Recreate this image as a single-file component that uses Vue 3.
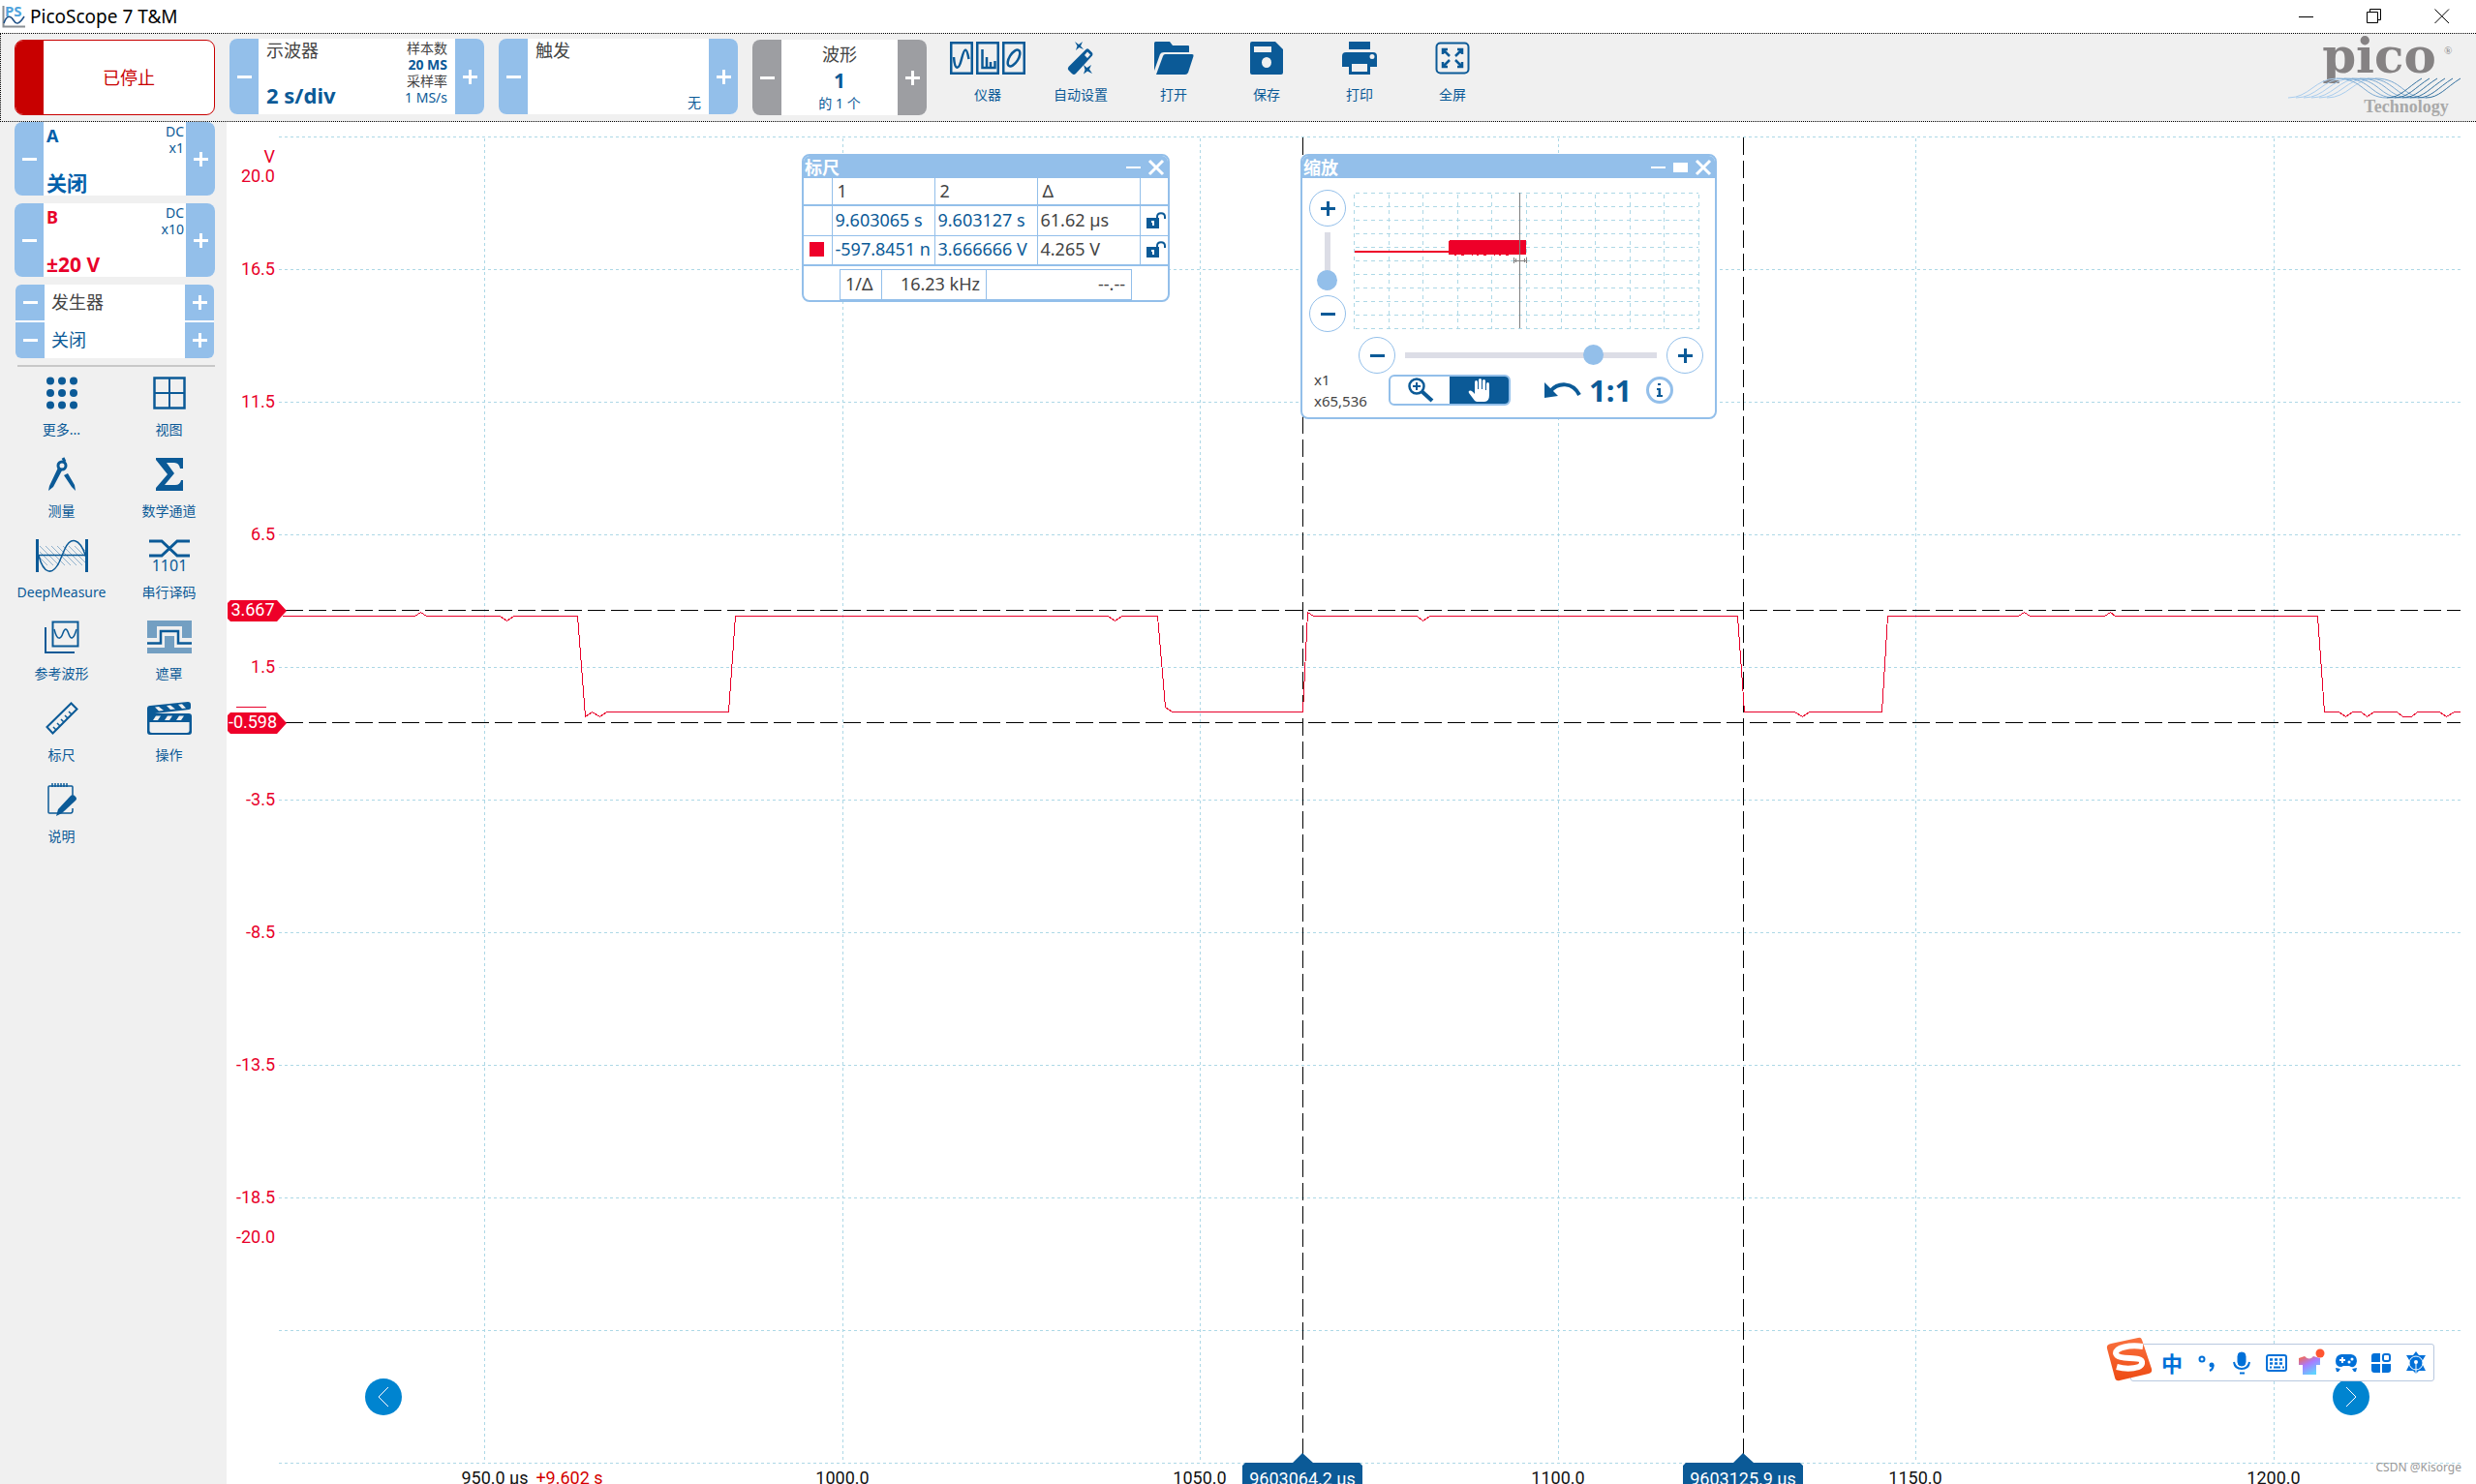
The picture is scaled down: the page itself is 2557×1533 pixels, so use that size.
<script setup>
import { ref } from 'vue'

const zoomX = ref(77)
const zoomY = ref(0)

const columns = [
  { x: 500, label: '950.0 µs', lx: 511 },
  { x: 870, label: '1000.0', lx: 870 },
  { x: 1239, label: '1050.0', lx: 1239 },
  { x: 1609, label: '1100.0', lx: 1609 },
  { x: 1978, label: '1150.0', lx: 1978 },
  { x: 2348, label: '1200.0', lx: 2348 },
]
const rows = [141, 278, 415, 552, 689, 826, 963, 1100, 1237, 1374, 1511]
const volts = [
  { y: 168, t: 'V' },
  { y: 188, t: '20.0' },
  { y: 284, t: '16.5' },
  { y: 421, t: '11.5' },
  { y: 558, t: '6.5' },
  { y: 695, t: '1.5' },
  { y: 832, t: '-3.5' },
  { y: 969, t: '-8.5' },
  { y: 1106, t: '-13.5' },
  { y: 1243, t: '-18.5' },
  { y: 1284, t: '-20.0' },
]
const levels = [
  { y: 630, t: '3.667' },
  { y: 746, t: '-0.598' },
]
const markers = [
  { x: 1345, t: '9603064.2 µs' },
  { x: 1800, t: '9603125.9 µs' },
]
const trace = [
  '291,636 428,636 434,632 440,636 516,636 523,641 530,636 596,636 604,740 611,735 619,740 626,735',
  '752,735 759,636 1144,636 1151,641 1158,636 1195,636 1203,730 1210,735 1345,735 1350,632 1356,636',
  '1463,636 1469,641 1476,636 1794,636 1801,735 1853,735 1861,740 1868,735 1943,735 1949,636',
  '2084,636 2090,632 2096,636 2173,636 2179,632 2184,636 2393,636 2400,735 2415,735 2422,740 2429,735',
  '2438,735 2444,740 2451,735 2475,735 2481,740 2490,740 2496,735 2519,735 2526,740 2534,735 2540,735',
].join(' ')
const miniCols = Array.from({ length: 11 }, (_, i) => Math.round(i * 35.6))
const miniRows = Array.from({ length: 11 }, (_, i) => i * 14)
</script>

<template>
  <div class="app">
    <header class="titlebar">
      <svg class="app-icon" width="24" height="24" viewBox="0 0 24 24" fill="none">
        <path d="M1.500 1V22.500H24" stroke="#8a8f94" stroke-width="2" />
        <path d="M2 19C5 10 9 11 12 16S18 20 23 12" stroke="#1d4f86" stroke-width="1.500" />
        <text x="3" y="12" font-family="Noto Sans" font-weight="700" font-size="15" fill="#4fa3dc">PS</text>
      </svg>
      <h1>PicoScope 7 T&amp;M</h1>
      <div class="win-buttons">
        <button aria-label="最小化"><svg width="16" height="16"><path d="M0 8.500H15" stroke="#000" /></svg></button>
        <button aria-label="还原"><svg width="16" height="16" fill="none" stroke="#000"><path d="M.5 3.500H11.500V14.500H.5ZM3.500 3.500V.5H14.500V11.500H11.500" /></svg></button>
        <button aria-label="关闭"><svg width="16" height="16"><path d="M.5 .5L15 15M15 .5L.5 15" stroke="#000" /></svg></button>
      </div>
    </header>

    <nav class="toolbar">
      <button class="stop"><span class="stop-bar"></span><span class="stop-text">已停止</span></button>

      <section class="stepper scope">
        <button aria-label="减小时基"><i class="minus"></i></button>
        <div class="stepper-body spread">
          <div class="stack"><span class="name">示波器</span><strong class="big">2 s/div</strong></div>
          <div class="info">
            <span class="dark">样本数</span><b>20 MS</b><span class="dark">采样率</span><span>1 MS/s</span>
          </div>
        </div>
        <button aria-label="增大时基"><i class="plus"></i></button>
      </section>

      <section class="stepper trigger">
        <button aria-label="上一触发"><i class="minus"></i></button>
        <div class="stepper-body stack"><span class="name">触发</span><span class="none">无</span></div>
        <button aria-label="下一触发"><i class="plus"></i></button>
      </section>

      <section class="stepper grey wave">
        <button aria-label="上一波形"><i class="minus"></i></button>
        <div class="stepper-body centered"><span class="name">波形</span><strong>1</strong><span class="small">的 1 个</span></div>
        <button aria-label="下一波形"><i class="plus"></i></button>
      </section>

      <div class="tools">
        <button class="tool">
          <svg width="78" height="34" viewBox="0 0 78 34" fill="none" stroke="#0b5a97" stroke-width="2.500">
            <path d="M1.250 1.250H22.750V32.750H1.250ZM28.250 1.250H49.750V32.750H28.250ZM55.250 1.250H76.750V32.750H55.250Z" />
            <path d="M4 16C5 30 9 30 12 18S17 5 19.500 18" />
            <path d="M33.500 8V27H46.500V20M38 27V16M42 27V21" />
            <ellipse cx="66" cy="17" rx="4.500" ry="9.500" transform="rotate(32 66 17)" />
          </svg>
          <span>仪器</span>
        </button>
        <button class="tool">
          <svg width="28" height="34" viewBox="0 0 28 34" fill="#0b5a97">
            <path fill-rule="evenodd" d="M19.500 8Q21 6.500 22.500 8L26 11.500Q27 13 26 14.500L9 33Q7 35 5 33L1.500 29.500Q0 28 1.500 26ZM21 10.500L18 14L21 17L24 13.500Z" />
            <path d="M8 0L12 3L16 0L14 4.500L17 8L12.500 6L9 9L10.500 4.500ZM17 24L20.500 27L25 24L23 28.500L26 33L21 30.500L17 33.500L18.500 29Z" />
          </svg>
          <span>自动设置</span>
        </button>
        <button class="tool">
          <svg width="42" height="34" viewBox="0 0 42 34" fill="#0b5a97">
            <path d="M1 34V1.500Q1 0 2.500 0H17L20 4H36Q37 4 37 5V11H11Q8 11 7 13L1 30Z" />
            <path d="M3 34L10 15Q10.500 13 12.500 13H40Q42 13 41.500 15L36 32Q35 34 33 34Z" />
          </svg>
          <span>打开</span>
        </button>
        <button class="tool">
          <svg width="34" height="34" viewBox="0 0 34 34" fill="#0b5a97">
            <path fill-rule="evenodd" d="M2 0H26L34 8V32Q34 34 32 34H2Q0 34 0 32V2Q0 0 2 0ZM4 5V11H22V5ZM17 16A5 5.500 0 1 0 17 27A5 5.500 0 1 0 17 16Z" />
          </svg>
          <span>保存</span>
        </button>
        <button class="tool">
          <svg width="36" height="34" viewBox="0 0 36 34" fill="#0b5a97">
            <path d="M7 0H29V8H7Z" />
            <path fill-rule="evenodd" d="M4 11H32Q36 11 36 15V26H29V34H7V26H0V15Q0 11 4 11ZM10 23V31H26V23ZM31 13A2.500 2.500 0 1 0 31 18A2.500 2.500 0 1 0 31 13Z" />
          </svg>
          <span>打印</span>
        </button>
        <button class="tool">
          <svg width="36" height="34" viewBox="0 0 36 34" fill="none" stroke="#0b5a97" stroke-width="2.500">
            <rect x="1.500" y="1.500" width="33" height="31" rx="4" stroke-width="2" />
            <path d="M8 13V8H13M8 8L15 15M23 8H28V13M28 8L21 15M8 21V26H13M8 26L15 19M23 26H28V21M28 26L21 19" />
          </svg>
          <span>全屏</span>
        </button>
      </div>

      <svg class="logo" width="184" height="88" viewBox="0 0 184 88">
        <text x="94" y="39" text-anchor="middle" font-family="DejaVu Serif" font-weight="700" font-size="50" fill="#858283">pico</text>
        <text x="161" y="20" font-family="Liberation Serif" font-size="11" fill="#858283">®</text>
        <g fill="none" stroke-width="1">
          <path v-for="i in 6" :key="'l' + i" :transform="`translate(${i * 8 - 8} 0)`" stroke="#a9cdee" d="M0 65C22 65 28 45 50 45" />
          <path v-for="i in 6" :key="'m' + i" :transform="`translate(${i * 8 - 8} 0)`" stroke="#7ba9d2" d="M50 45C78 45 78 65 102 65" />
          <path v-for="i in 6" :key="'r' + i" :transform="`translate(${i * 8 - 8} 0)`" stroke="#34719f" d="M102 65C116 65 122 55 138 45" />
        </g>
        <text x="122" y="80" text-anchor="middle" font-family="Liberation Serif" font-weight="700" font-size="18" fill="#a9a9a9">Technology</text>
      </svg>
    </nav>

    <div class="main">
      <aside class="sidebar">
        <section class="stepper channel blue">
          <button aria-label="减小 A"><i class="minus"></i></button>
          <div class="stepper-body spread">
            <div class="stack"><b>A</b><strong class="big">关闭</strong></div>
            <div class="info"><span>DC</span><span>x1</span></div>
          </div>
          <button aria-label="增大 A"><i class="plus"></i></button>
        </section>
        <section class="stepper channel red">
          <button aria-label="减小 B"><i class="minus"></i></button>
          <div class="stepper-body spread">
            <div class="stack"><b>B</b><strong class="big">±20 V</strong></div>
            <div class="info"><span>DC</span><span>x10</span></div>
          </div>
          <button aria-label="增大 B"><i class="plus"></i></button>
        </section>
        <section class="generator">
          <div class="gen-row"><button aria-label="减小发生器"><i class="minus"></i></button><span class="name">发生器</span><button aria-label="增大发生器"><i class="plus"></i></button></div>
          <div class="gen-row"><button aria-label="上一状态"><i class="minus"></i></button><span>关闭</span><button aria-label="下一状态"><i class="plus"></i></button></div>
        </section>
        <hr />
        <div class="side-tools">
          <button class="tool">
            <svg width="34" height="34" viewBox="0 0 34 34" fill="#0b5a97">
              <template v-for="r in 3" :key="r"><circle v-for="c in 3" :key="c" :cx="c * 12 - 7" :cy="r * 12.500 - 8" r="4" /></template>
            </svg>
            <span>更多...</span>
          </button>
          <button class="tool">
            <svg width="34" height="34" viewBox="0 0 34 34" fill="none" stroke="#0b5a97"><path stroke-width="2.500" d="M1.500 1.500H32.500V32.500H1.500Z" /><path stroke-width="2" d="M17 1V33M1 17H33" /></svg>
            <span>视图</span>
          </button>
          <button class="tool">
            <svg width="30" height="34" viewBox="0 0 30 34" fill="none" stroke="#0b5a97">
              <circle cx="15" cy="8" r="4" stroke-width="3" /><path stroke-width="3" d="M16 0L18 4" />
              <path fill="#0b5a97" stroke="none" d="M11 10L15 13L6 30L1 34L2 29ZM17 18L21 16L28 28L29 34L25 30Z" />
            </svg>
            <span>测量</span>
          </button>
          <button class="tool">
            <svg width="30" height="34" viewBox="0 0 30 34" fill="#0b5a97"><path d="M1 0H29V11H26Q25 5 20 5H12L20 16L10 28H21Q26 28 27 23H29V34H1V31L13 17L1 2Z" /></svg>
            <span>数学通道</span>
          </button>
          <button class="tool">
            <svg width="54" height="34" viewBox="0 0 54 34" fill="none" stroke="#0b5a97">
              <path stroke="#8fb1cd" stroke-width="1" d="M4 7L24 27M10 7L30 27M16 7L36 27M22 7L42 27M28 7L48 27M34 7L51 24M40 7L51 18M46 7L51 12M4 13L18 27M4 19L12 27" />
              <path stroke-width="3" d="M1.500 0V34M52.500 0V34" /><path stroke-width="1.500" d="M3 16.500H51" />
              <path stroke-width="1.500" d="M3 17C8 36 17 38 24 24L30 10C36 -3 45 -1 51 16" />
            </svg>
            <span>DeepMeasure</span>
          </button>
          <button class="tool">
            <svg width="42" height="34" viewBox="0 0 42 34">
              <path fill="none" stroke="#0b5a97" stroke-width="3" d="M0 2H13L29 17H42M0 17H13L29 2H42" />
              <text x="21" y="33" text-anchor="middle" font-family="Noto Sans" font-size="16" fill="#0b5a97">1101</text>
            </svg>
            <span>串行译码</span>
          </button>
          <button class="tool">
            <svg width="36" height="34" viewBox="0 0 36 34" fill="none" stroke="#0b5a97">
              <rect x="8.500" y="1.500" width="26" height="25" stroke-width="2" /><path stroke-width="2" d="M1 7V33H31" />
              <path stroke-width="1.500" d="M10 9C13 22 17 19 19 13S23 8 25 14S30 20 33 9" />
            </svg>
            <span>参考波形</span>
          </button>
          <button class="tool">
            <svg width="46" height="34" viewBox="0 0 46 34">
              <path fill="#739fc2" d="M0 0H46V18H36V6H10V18H0ZM0 28H18V16H28V28H46V34H0Z" />
              <path fill="none" stroke="#0b5a97" stroke-width="2.500" d="M0 23.500H14V11H32V23.500H46" />
            </svg>
            <span>遮罩</span>
          </button>
          <button class="tool">
            <svg width="34" height="34" viewBox="0 0 34 34" fill="none" stroke="#0b5a97" stroke-width="2">
              <path d="M1.500 26L26.500 1.500L32.500 7.500L7.500 32.500Z" /><path stroke-width="1.500" d="M11 29L8 26M15 25L12 22M19 21L16 18M23 17L20 14M27 13L24 10" />
            </svg>
            <span>标尺</span>
          </button>
          <button class="tool">
            <svg width="46" height="34" viewBox="0 0 46 34">
              <path fill="#0b5a97" d="M3 4L42 0Q45 0 45 3V6Q45 8 43 8L8 12H43Q46 12 46 15V31Q46 34 43 34H3Q0 34 0 31V7Q0 4 3 4Z" />
              <path fill="#f0f0f0" d="M2.500 21H43.500V30Q43.500 32 41 32H5Q2.500 32 2.500 30ZM8 5.500L12 5L17 9L12 9.500ZM20 4L24 3.600L29 7.500L24 8ZM32 2.700L36 2.300L40 6.500L36 7ZM9 14.500H14L11 19H6ZM21 14.500H26L23 19H18ZM33 14.500H38L35 19H30Z" />
            </svg>
            <span>操作</span>
          </button>
          <button class="tool">
            <svg width="30" height="34" viewBox="0 0 30 34" fill="none" stroke="#0b5a97" stroke-width="1.500">
              <path d="M26 12V4Q26 3 25 3H2Q1 3 1 4V30Q1 31 2 31H24Q26 31 26 28V26M5 0V4M8 0V4M11 0V4M14 0V4M17 0V4M20 0V4" />
              <path fill="#0b5a97" stroke="none" d="M9 34L11 27L24 13Q26 11 28 13L29 14Q31 16 29 18L15 31Z" />
            </svg>
            <span>说明</span>
          </button>
        </div>
      </aside>

      <main class="plot">
        <svg class="graph" viewBox="234 126 2323 1407">
          <g stroke="#add8e6" stroke-dasharray="3 3" shape-rendering="crispEdges">
            <line v-for="c in columns" :key="c.x" :x1="c.x + 0.5" :x2="c.x + 0.5" y1="143" y2="1511" />
            <line v-for="y in rows" :key="y" x1="288" x2="2541" :y1="y + 0.5" :y2="y + 0.5" />
          </g>
          <g stroke="#000" stroke-dasharray="18 6" shape-rendering="crispEdges">
            <line v-for="l in levels" :key="l.t" x1="295" x2="2541" :y1="l.y + 0.5" :y2="l.y + 0.5" />
            <line v-for="m in markers" :key="m.x" :x1="m.x + 0.5" :x2="m.x + 0.5" y1="142" y2="1502" />
          </g>
          <polyline :points="trace" transform="translate(0.5 0.5)" fill="none" stroke="#e8002a" shape-rendering="crispEdges" />
          <line x1="244" x2="275" y1="730.5" y2="730.5" stroke="#e8002a" />
          <g class="volts"><text v-for="v in volts" :key="v.y" x="284" :y="v.y">{{ v.t }}</text></g>
          <g v-for="l in levels" :key="l.t" :transform="`translate(235 ${l.y - 10})`">
            <path d="M3 0H51L61 11L51 22H3L0 19V3Z" fill="#ee0029" />
            <text class="level" x="26" y="16">{{ l.t }}</text>
          </g>
          <text v-for="c in columns" :key="c.x" class="time" :x="c.lx" y="1533">{{ c.label }}</text>
          <text class="time offset" x="588" y="1533">+9.602 s</text>
          <g v-for="m in markers" :key="m.t" :transform="`translate(${m.x} 1501)`">
            <path d="M0 0L11 10H59L62 13V32H-62V13L-59 10H-10Z" fill="#0b5a97" />
            <text class="time flag" x="0" y="33">{{ m.t }}</text>
          </g>
        </svg>

        <section class="window rulers">
          <header><h2>标尺</h2><button aria-label="最小化"><i class="bar"></i></button><button aria-label="关闭"><svg width="16" height="16"><path d="M1 1L15 15M15 1L1 15" stroke="#fff" stroke-width="3" /></svg></button></header>
          <table class="values">
            <colgroup><col class="c-key" /><col class="c-val" /><col class="c-val" /><col class="c-val" /><col class="c-lock" /></colgroup>
            <tbody>
              <tr><th></th><th>1</th><th>2</th><th>Δ</th><th></th></tr>
              <tr>
                <td></td><td class="edit">9.603065 s</td><td class="edit">9.603127 s</td><td>61.62 µs</td>
                <td class="lock"><svg width="20" height="18" viewBox="0 0 20 18"><path fill="#0b5a97" d="M0 6H13V17H0Z" /><path fill="none" stroke="#0b5a97" stroke-width="2" d="M11 7V5C11 0 19 0 19 5V7" /><path fill="#fff" d="M5 9H8V14H6V11H5Z" /></svg></td>
              </tr>
              <tr>
                <td><span class="swatch"></span></td><td class="edit">-597.8451 n</td><td class="edit">3.666666 V</td><td>4.265 V</td>
                <td class="lock"><svg width="20" height="18" viewBox="0 0 20 18"><path fill="#0b5a97" d="M0 6H13V17H0Z" /><path fill="none" stroke="#0b5a97" stroke-width="2" d="M11 7V5C11 0 19 0 19 5V7" /><path fill="#fff" d="M5 9H8V14H6V11H5Z" /></svg></td>
              </tr>
            </tbody>
          </table>
          <table class="frequency">
            <tbody><tr><th>1/Δ</th><td class="freq">16.23 kHz</td><td>--.--</td></tr></tbody>
          </table>
        </section>

        <section class="window zoom">
          <header><h2>缩放</h2><button aria-label="最小化"><i class="bar"></i></button><button aria-label="最大化"><i class="box"></i></button><button aria-label="关闭"><svg width="16" height="16"><path d="M1 1L15 15M15 1L1 15" stroke="#fff" stroke-width="3" /></svg></button></header>
          <div class="zoom-top">
            <div class="vertical">
              <button class="round" aria-label="垂直放大"><i class="plus"></i></button>
              <input v-model="zoomY" class="slider-v" type="range" min="0" max="100" aria-label="垂直缩放" />
              <button class="round" aria-label="垂直缩小"><i class="minus"></i></button>
            </div>
            <svg class="mini" width="358" height="142" viewBox="0 0 358 142" shape-rendering="crispEdges">
              <g stroke="#add8e6" stroke-dasharray="4 4">
                <line v-for="x in miniCols" :key="x" :x1="x + 0.5" :x2="x + 0.5" y1="2" y2="141" />
                <line v-for="y in miniRows" :key="y" x1="2" x2="356" :y1="y + 0.5" :y2="y + 0.5" />
              </g>
              <path fill="#ee0029" d="M1 60H98V50L100 49H178V64H98V62H1Z" />
              <path fill="none" stroke="#ee0029" stroke-dasharray="2 5 3 8 1 4" d="M104 64.500H160" />
              <path fill="none" stroke="#808080" d="M171.500 0V140M165.500 67V73M178.500 67V73M167.500 68V72M176.500 68V72M165 70.500H179" />
            </svg>
          </div>
          <div class="horizontal">
            <button class="round" aria-label="水平缩小"><i class="minus"></i></button>
            <input v-model="zoomX" class="slider-h" type="range" min="0" max="100" aria-label="水平缩放" />
            <button class="round" aria-label="水平放大"><i class="plus"></i></button>
          </div>
          <div class="zoom-bottom">
            <div class="factors"><span>x1</span><span>x65,536</span></div>
            <div class="modes">
              <button aria-label="放大工具"><svg width="28" height="26" viewBox="0 0 28 26" fill="none" stroke="#0b5a97"><circle cx="10" cy="9" r="7.500" stroke-width="2.500" /><path stroke-width="2" d="M6 9H14M10 5V13" /><path stroke-width="4" d="M15 14L26 24" /></svg></button>
              <button class="active" aria-label="平移工具"><svg width="24" height="26" viewBox="0 0 24 26" fill="#fff"><path d="M7 24L1 16Q0 14 2 13.500Q4 13 7 17V5Q7 3 8.500 3T10 5V12H11V2.500Q11 1 12.500 1T14 2.500V12H15V3.500Q15 2 16.500 2T18 3.500V13H19V7Q19 5 20.500 5T22 7V18Q22 25 17 25H10Q8 25 7 24Z" /></svg></button>
            </div>
            <button class="undo" aria-label="撤消"><svg width="38" height="18" viewBox="0 0 38 18"><path fill="#0b5a97" d="M0 1L14 15L0 17Z" /><path fill="none" stroke="#0b5a97" stroke-width="4" d="M6 10C14 1 29 0 36 14" /></svg></button>
            <button class="one">1:1</button>
            <button class="about" aria-label="信息"><svg width="28" height="28" viewBox="0 0 28 28"><circle cx="14" cy="14" r="12.500" fill="none" stroke="#93bfea" stroke-width="3" /><path fill="#0b5a97" d="M12 7H15V9H12ZM11 12H15V19H17V21H11V19H12.500V14H11Z" /></svg></button>
          </div>
        </section>

        <button class="page prev" aria-label="上一页"><svg width="12" height="22"><path d="M11 1L1 11L11 21" fill="none" stroke="#fff" /></svg></button>
        <button class="page next" aria-label="下一页"><svg width="12" height="22"><path d="M1 1L11 11L1 21" fill="none" stroke="#fff" /></svg></button>

        <div class="ime">
          <svg class="sogou" width="48" height="46" viewBox="0 0 48 46">
            <defs><linearGradient id="sg" x1="0" y1="0" x2="0" y2="1"><stop offset="0" stop-color="#f9713f" /><stop offset="1" stop-color="#ee4a12" /></linearGradient></defs>
            <path d="M5 7L33 1Q36 0 37 3L47 33Q48 37 44 38L14 45Q10 46 9 42L1 12Q0 8 5 7Z" fill="url(#sg)" />
            <path d="M38 10C24 8 10 11 10 17C11 25 37 19 37 26C38 33 22 34 11 31" fill="none" stroke="#fff" stroke-width="6" />
          </svg>
          <button class="zh">中</button>
          <button aria-label="标点"><svg width="22" height="22" fill="none" stroke="#0070d8"><circle cx="6" cy="7" r="2.500" stroke-width="2" /><circle cx="16" cy="13" r="2.500" fill="#0070d8" stroke="none" /><path d="M17.500 13Q18 17 14 19" stroke-width="2" /></svg></button>
          <button aria-label="语音"><svg width="20" height="24" fill="none" stroke="#0070d8"><rect x="6" y="1" width="8" height="14" rx="4" fill="#0070d8" /><path stroke-width="2" d="M2 11Q3 18 10 18T18 11M8 22.500H13" /></svg></button>
          <button aria-label="键盘"><svg width="24" height="22" fill="none" stroke="#0070d8"><rect x="2" y="3" width="20" height="16" rx="2" stroke-width="2" /><path stroke-width="2.500" stroke-dasharray="3 2" d="M5 7.500H20M5 11.500H20" /><path stroke-width="2" d="M5 15.500H7M9 15.500H16M18 15.500H20" /></svg></button>
          <button aria-label="皮肤"><svg width="28" height="30"><defs><linearGradient id="sh" x1="0" y1="0" x2="0.600" y2="1"><stop offset="0" stop-color="#ff6535" /><stop offset="0.500" stop-color="#a87cff" /><stop offset="1" stop-color="#5fd4ff" /></linearGradient></defs><path fill="url(#sh)" d="M1 10L7 8Q12 13 16 8L23 10L23 17H19V27H5V17H1Z" /><circle cx="23" cy="5" r="4.500" fill="#ff5530" /></svg></button>
          <button aria-label="游戏"><svg width="24" height="22"><path fill="#0070d8" d="M7 2H17Q23 3 23 9Q22 16 17 15L15 14H9L7 15Q1 15 1 9Q1 3 7 2ZM1 16L6 17L4 20H2ZM23 16L18 17L20 20H22Z" /><path stroke="#fff" stroke-width="2" d="M5 8H11M8 5V11" /><circle cx="15" cy="10" r="1.500" fill="#fff" /><circle cx="18" cy="7" r="1.500" fill="#fff" /></svg></button>
          <button aria-label="工具箱"><svg width="22" height="22"><path fill="#0070d8" d="M4 1H10V10H1V4Q1 1 4 1ZM1 12H10V21H4Q1 21 1 18ZM12 12H21V18Q21 21 18 21H12Z" /><rect x="13" y="2" width="7" height="7" rx="2" fill="none" stroke="#0070d8" stroke-width="2" /></svg></button>
          <button aria-label="设置"><svg width="22" height="24"><path fill="#0070d8" d="M11 0L14 4H21L18 9V14L21 20H14L11 23L8 20H1L4 14V9L1 4H8Z" /><circle cx="11" cy="12" r="7" fill="#0070d8" stroke="#fff" /><circle cx="11" cy="11" r="2" fill="#fff" /><path stroke="#fff" stroke-width="1" d="M11 12V23" /></svg></button>
        </div>
        <span class="credit">CSDN @Kisorge</span>
      </main>
    </div>
  </div>
</template>

<style>
body {
  margin: 0;
  overflow: hidden;
}
</style>

<style scoped>
.app {
  height: 100vh;
  display: flex;
  flex-direction: column;
  overflow: hidden;
  background: #fff;
  color: #0b5a97;
  font: 14px/17px 'Noto Sans', 'Noto Sans CJK SC', sans-serif;
}
.app *, .app *::before, .app *::after { box-sizing: border-box; }
button {
  border: 0;
  padding: 0;
  background: none;
  color: inherit;
  font: inherit;
  display: flex;
  align-items: center;
  justify-content: center;
}
svg { display: block; flex: none; overflow: visible; }
h1, h2 { margin: 0; }

.titlebar {
  flex: none;
  height: 34px;
  display: flex;
  align-items: center;
  padding-left: 2px;
  gap: 5px;
}
h1 { flex: 1; font-size: 19px; line-height: 26px; font-weight: 400; color: #000; }
.win-buttons { display: flex; }
.win-buttons button { width: 70px; height: 34px; }

.toolbar {
  flex: none;
  height: 92px;
  display: flex;
  align-items: center;
  gap: 15px;
  padding-left: 14px;
  border: 1px dotted #000;
  border-right: 0;
  background: #f0f0f0;
}
.stop {
  width: 207px;
  height: 78px;
  border: 1px solid #c80000;
  border-radius: 9px;
  background: #fff;
  color: #c80000;
  overflow: hidden;
  font-size: 18px;
}
.stop-bar { width: 29px; height: 100%; background: #c80000; }
.stop-text { flex: 1; }

.minus, .plus { position: relative; width: 15px; height: 15px; display: block; }
.minus::before, .plus::before, .plus::after {
  content: '';
  position: absolute;
  left: 0;
  top: 6px;
  width: 15px;
  height: 3px;
  background: currentColor;
}
.plus::after { left: 6px; top: 0; width: 3px; height: 15px; }

.stepper {
  height: 78px;
  display: flex;
  border-radius: 8px;
  overflow: hidden;
  background: #fff;
}
.stepper > button, .gen-row > button { width: 30px; flex: none; background: #93bfea; color: #fff; }
.grey > button { background: #9d9ea2; }
.stepper-body { flex: 1; display: flex; padding: 4px 8px; }
.spread { justify-content: space-between; }
.stack { display: flex; flex-direction: column; justify-content: space-between; }
.name { color: #444; font-size: 18px; line-height: 22px; }
.big { font-size: 21px; line-height: 28px; }
.info { display: flex; flex-direction: column; text-align: right; }
.dark { color: #444; }
.scope { width: 263px; margin-bottom: 2px; }
.scope .stepper-body { padding: 1px 8px 6px; }
.scope .big { font-size: 22px; }
.trigger { width: 247px; margin-bottom: 2px; }
.trigger .stepper-body { padding-top: 1px; }
.none { text-align: right; }
.wave { width: 180px; }
.centered { flex-direction: column; align-items: center; justify-content: space-between; }
.centered strong { font-size: 21px; line-height: 24px; }
.tools { display: flex; flex: 1; margin-bottom: 9px; }
.tools .tool { width: 96px; }
.tool { flex-direction: column; gap: 10px; line-height: 22px; white-space: nowrap; }
.logo { margin-right: 10px; }

.main { flex: 1; min-height: 0; display: flex; }
.sidebar { flex: none; width: 234px; background: #f0f0f0; padding: 0 12px 0 15px; }
.channel { width: 207px; height: 76px; margin-bottom: 8px; }
.channel .stepper-body { padding: 1px 2px 0 3px; }
.channel b { font-size: 18px; line-height: 26px; }
.channel .big { line-height: 26px; }
.blue .stack { color: #0060aa; }
.red .stack { color: #e8002a; }
.generator {
  width: 205px;
  margin: 0 1px;
  border-radius: 6px;
  overflow: hidden;
  background: #fff;
  display: flex;
  flex-direction: column;
  gap: 2px;
}
.gen-row { display: flex; height: 37px; }
.gen-row > span { flex: 1; padding-left: 7px; font-size: 18px; line-height: 37px; }
hr { width: 204px; height: 2px; margin: 7px 3px 10px; border: 0; background: #c8c8c8; }
.side-tools { display: grid; grid-template-columns: 111px 111px; row-gap: 18px; margin-left: -7px; }

.plot { flex: 1; min-width: 0; position: relative; overflow: hidden; }
.graph { width: 100%; font: 18px Roboto, sans-serif; }
.volts { fill: #e8002a; text-anchor: end; }
.level { fill: #fff; text-anchor: middle; }
.time { fill: #111; text-anchor: middle; }
.offset { fill: #d40000; }
.flag { fill: #fff; }

.window {
  position: absolute;
  top: 33px;
  border: 2px solid #93bfea;
  border-radius: 8px;
  background: #fff;
  overflow: hidden;
  color: #444;
}
.window header {
  height: 23px;
  display: flex;
  align-items: center;
  gap: 8px;
  padding: 0 4px 0 1px;
  background: #93bfea;
  color: #fff;
}
h2 { flex: 1; font-size: 18px; font-weight: 700; line-height: 22px; }
.bar { width: 15px; height: 2px; background: #fff; }
.box { width: 15px; height: 10px; background: #fff; }
.rulers { left: 594px; width: 380px; }
table { border-collapse: collapse; table-layout: fixed; font-size: 18px; line-height: 22px; }
th, td {
  padding: 0 3px 2px;
  white-space: nowrap;
  text-align: left;
  font-weight: 400;
  border: 1px solid #93bfea;
}
.values { width: 100%; border-style: hidden; border-bottom: 2px solid #93bfea; }
.values tr { height: 31px; }
.values tr:first-child { height: 28px; border-bottom: 2px solid #93bfea; }
.values th { padding-left: 5px; }
.c-key { width: 29px; }
.c-val { width: 106px; }
.c-lock { width: 29px; }
.edit { color: #0b5a97; }
.lock { padding: 0 6px; }
.swatch { display: block; width: 15px; height: 15px; margin-left: 3px; background: #ee0029; }
.frequency { width: 302px; margin: 3px 0 0 37px; }
.frequency tr { height: 31px; }
.frequency th { width: 43px; padding-left: 5px; }
.frequency td { text-align: right; padding-right: 6px; }
.freq { width: 108px; }

.zoom { left: 1109px; width: 430px; height: 274px; }
.zoom-top { display: flex; gap: 8px; padding: 12px 0 0 7px; }
.vertical { width: 38px; height: 147px; display: flex; flex-direction: column; align-items: center; justify-content: space-between; }
.mini { margin-top: 3px; }
.round { flex: none; width: 38px; height: 38px; border: 1px solid #93bfea; border-radius: 50%; color: #0b5a97; }
.slider-v, .slider-h { appearance: none; margin: 0; background: transparent; }
.slider-v { writing-mode: vertical-lr; direction: rtl; width: 21px; height: 60px; }
.slider-h { width: 260px; height: 21px; }
.slider-v::-webkit-slider-runnable-track { width: 6px; background: #dcdde6; }
.slider-h::-webkit-slider-runnable-track { height: 6px; background: #dcdde6; }
.slider-v::-webkit-slider-thumb { appearance: none; width: 21px; height: 21px; margin-left: -8px; border-radius: 50%; background: #93bfea; }
.slider-h::-webkit-slider-thumb { appearance: none; width: 21px; height: 21px; margin-top: -8px; border-radius: 50%; background: #93bfea; }
.horizontal { display: flex; align-items: center; gap: 10px; padding: 5px 0 0 58px; }
.zoom-bottom { display: flex; align-items: center; height: 34px; padding-left: 12px; }
.factors { width: 77px; display: flex; flex-direction: column; line-height: 22px; font-size: 15px; }
.modes { display: flex; width: 126px; height: 32px; border: 2px solid #93bfea; border-radius: 6px; overflow: hidden; }
.modes button { flex: 1; }
.modes .active { background: #0b5a97; }
.undo { margin-left: 35px; }
.one { margin-left: 8px; font-size: 31px; line-height: 30px; font-weight: 700; color: #0b5a97; }
.about { margin-left: 15px; }

.page { position: absolute; bottom: 71px; width: 38px; height: 38px; border-radius: 50%; background: #0084d0; }
.prev { left: 143px; }
.next { right: 110px; }
.ime {
  position: absolute;
  right: 43px;
  bottom: 106px;
  width: 314px;
  height: 39px;
  display: flex;
  align-items: center;
  padding-left: 24px;
  border: 1px solid #b9c9e0;
  border-radius: 3px;
  background: #fff;
}
.ime button { width: 36px; height: 36px; color: #0070d8; }
.ime .zh { font-size: 22px; line-height: 32px; font-weight: 700; }
.sogou { position: absolute; left: -26px; bottom: -1px; }
.credit { position: absolute; right: 15px; bottom: 8px; font-size: 12px; line-height: 18px; color: #999; }
</style>
